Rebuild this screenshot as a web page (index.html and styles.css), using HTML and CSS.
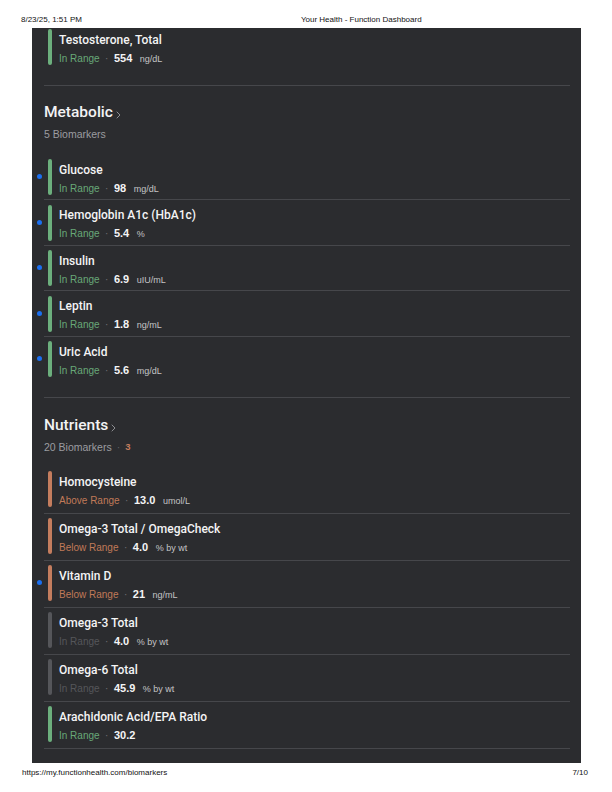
FILE: index.html
```html
<!DOCTYPE html>
<html lang="en">
<head>
<meta charset="utf-8">
<title>Your Health - Function Dashboard</title>
<link rel="stylesheet" href="styles.css">
</head>
<body>
<div class="page">
  <header class="print-header">
    <span class="print-date">8/23/25, 1:51 PM</span>
    <span class="print-title">Your Health - Function Dashboard</span>
  </header>

  <main class="panel">
    <section class="section section--tail">
      <div class="item item--first">
        <div class="bar bar--green"></div>
        <div class="item-text">
          <div class="item-name">Testosterone, Total</div>
          <div class="item-sub"><span class="status status--green">In Range</span><span class="sep">·</span><span class="value">554</span><span class="unit">ng/dL</span></div>
        </div>
      </div>
    </section>

    <section class="section section--metabolic">
      <div class="section-head">
        <h2 class="section-title">Metabolic <svg class="chev" width="5" height="8" viewBox="0 0 5 8"><path d="M1 1l3 3-3 3" fill="none" stroke="#8d8e92" stroke-width="1" stroke-linecap="round" stroke-linejoin="round"/></svg></h2>
        <div class="section-count">5 Biomarkers</div>
      </div>
      <div class="list">
        <div class="item">
          <div class="bar bar--green"><span class="dot"></span></div>
          <div class="item-text">
            <div class="item-name">Glucose</div>
            <div class="item-sub"><span class="status status--green">In Range</span><span class="sep">·</span><span class="value">98</span><span class="unit">mg/dL</span></div>
          </div>
        </div>
        <div class="item">
          <div class="bar bar--green"><span class="dot"></span></div>
          <div class="item-text">
            <div class="item-name">Hemoglobin A1c (HbA1c)</div>
            <div class="item-sub"><span class="status status--green">In Range</span><span class="sep">·</span><span class="value">5.4</span><span class="unit">%</span></div>
          </div>
        </div>
        <div class="item">
          <div class="bar bar--green"><span class="dot"></span></div>
          <div class="item-text">
            <div class="item-name">Insulin</div>
            <div class="item-sub"><span class="status status--green">In Range</span><span class="sep">·</span><span class="value">6.9</span><span class="unit">uIU/mL</span></div>
          </div>
        </div>
        <div class="item">
          <div class="bar bar--green"><span class="dot"></span></div>
          <div class="item-text">
            <div class="item-name">Leptin</div>
            <div class="item-sub"><span class="status status--green">In Range</span><span class="sep">·</span><span class="value">1.8</span><span class="unit">ng/mL</span></div>
          </div>
        </div>
        <div class="item">
          <div class="bar bar--green"><span class="dot"></span></div>
          <div class="item-text">
            <div class="item-name">Uric Acid</div>
            <div class="item-sub"><span class="status status--green">In Range</span><span class="sep">·</span><span class="value">5.6</span><span class="unit">mg/dL</span></div>
          </div>
        </div>
      </div>
    </section>

    <section class="section section--nutrients">
      <div class="section-head">
        <h2 class="section-title">Nutrients <svg class="chev" width="5" height="8" viewBox="0 0 5 8"><path d="M1 1l3 3-3 3" fill="none" stroke="#8d8e92" stroke-width="1" stroke-linecap="round" stroke-linejoin="round"/></svg></h2>
        <div class="section-count">20 Biomarkers<span class="sep">·</span><span class="count-flag">3</span></div>
      </div>
      <div class="list">
        <div class="item">
          <div class="bar bar--orange"></div>
          <div class="item-text">
            <div class="item-name">Homocysteine</div>
            <div class="item-sub"><span class="status status--orange">Above Range</span><span class="sep">·</span><span class="value">13.0</span><span class="unit">umol/L</span></div>
          </div>
        </div>
        <div class="item">
          <div class="bar bar--orange"></div>
          <div class="item-text">
            <div class="item-name">Omega-3 Total / OmegaCheck</div>
            <div class="item-sub"><span class="status status--orange">Below Range</span><span class="sep">·</span><span class="value">4.0</span><span class="unit">% by wt</span></div>
          </div>
        </div>
        <div class="item">
          <div class="bar bar--orange"><span class="dot"></span></div>
          <div class="item-text">
            <div class="item-name">Vitamin D</div>
            <div class="item-sub"><span class="status status--orange">Below Range</span><span class="sep">·</span><span class="value">21</span><span class="unit">ng/mL</span></div>
          </div>
        </div>
        <div class="item">
          <div class="bar bar--gray"></div>
          <div class="item-text">
            <div class="item-name">Omega-3 Total</div>
            <div class="item-sub"><span class="status status--gray">In Range</span><span class="sep">·</span><span class="value">4.0</span><span class="unit">% by wt</span></div>
          </div>
        </div>
        <div class="item">
          <div class="bar bar--gray"></div>
          <div class="item-text">
            <div class="item-name">Omega-6 Total</div>
            <div class="item-sub"><span class="status status--gray">In Range</span><span class="sep">·</span><span class="value">45.9</span><span class="unit">% by wt</span></div>
          </div>
        </div>
        <div class="item">
          <div class="bar bar--green"></div>
          <div class="item-text">
            <div class="item-name">Arachidonic Acid/EPA Ratio</div>
            <div class="item-sub"><span class="status status--green">In Range</span><span class="sep">·</span><span class="value">30.2</span></div>
          </div>
        </div>
        <div class="list-end"></div>
      </div>
    </section>
  </main>

  <footer class="print-footer">
    <span>https://my.functionhealth.com/biomarkers</span>
    <span>7/10</span>
  </footer>
</div>
</body>
</html>
```

FILE: styles.css
```css
* { box-sizing: border-box; }

html, body {
  margin: 0;
  padding: 0;
  background: #ffffff;
}

.page {
  width: 612px;
  height: 792px;
  font-family: "Liberation Sans", Arial, sans-serif;
}

.print-header {
  height: 28px;
  padding: 15px 0 0 21px;
  display: flex;
  font-size: 8px;
  line-height: 10px;
  color: #111;
}

.print-title {
  margin-left: 219px;
}

.panel {
  margin-left: 32px;
  width: 549px;
  height: 735px;
  overflow: hidden;
  background: #2b2c2f;
  padding: 0 11px 0 12px;
}

.section {
  border-bottom: 1px solid #46474b;
  padding-bottom: 16px;
}

.section-head {
  padding-top: 16px;
  margin-bottom: 13.5px;
}

.section--nutrients .section-head {
  padding-top: 17px;
  margin-bottom: 13px;
}

.section-title {
  margin: 0;
  font-family: Roboto, "Liberation Sans", sans-serif;
  font-weight: 500;
  font-size: 15.5px;
  line-height: 20px;
  color: #f3f3f4;
  display: flex;
  align-items: center;
}

.chev {
  margin-left: 3px;
  margin-top: 5px;
}

.section-count {
  margin-top: 5px;
  font-size: 10.5px;
  line-height: 14px;
  color: #9b9ca0;
  display: flex;
  align-items: center;
}

.section-count .sep {
  margin: 0 5px;
  color: #5e5f63;
}

.count-flag {
  color: #c47d5e;
  font-weight: bold;
  font-size: 9.5px;
}

.item {
  display: flex;
  padding: 4.5px 0 4px 4px;
}

.item + .item {
  border-top: 1px solid #46474b;
}

.section--nutrients .item {
  padding: 4px 0 6px 4px;
}

.item--first {
  padding-top: 1px;
}

.list-end {
  border-top: 1px solid #46474b;
}

.bar {
  position: relative;
  flex: 0 0 4px;
  width: 4px;
  height: 36px;
  border-radius: 2px;
}

.bar--green { background: #6caf7d; }
.bar--orange { background: #c47d5e; }
.bar--gray { background: #55565a; }

.dot {
  position: absolute;
  left: -11.5px;
  top: 15px;
  width: 5px;
  height: 5px;
  border-radius: 50%;
  background: #1b6ff0;
}

.item-text {
  margin-left: 7px;
  height: 36px;
}

.item-name {
  padding-top: 1.5px;
  font-family: Roboto, "Liberation Sans", sans-serif;
  font-weight: 500;
  font-size: 12px;
  line-height: 18px;
  color: #f4f4f5;
}

.item-sub {
  display: flex;
  align-items: baseline;
  height: 16.5px;
  line-height: 18px;
  font-size: 10px;
}

.status--green { color: #68a878; }
.status--orange { color: #c07a58; }
.status--gray { color: #55565a; }

.item-sub .sep {
  margin: 0 5.5px;
  color: #707175;
}

.value {
  font-weight: bold;
  font-size: 11px;
  color: #f4f4f5;
  margin-right: 7.5px;
}

.unit {
  font-size: 9px;
  color: #c4c4c6;
}

.print-footer {
  display: flex;
  justify-content: space-between;
  padding: 5px 24px 0 22px;
  font-size: 8px;
  line-height: 10px;
  color: #111;
}
```
